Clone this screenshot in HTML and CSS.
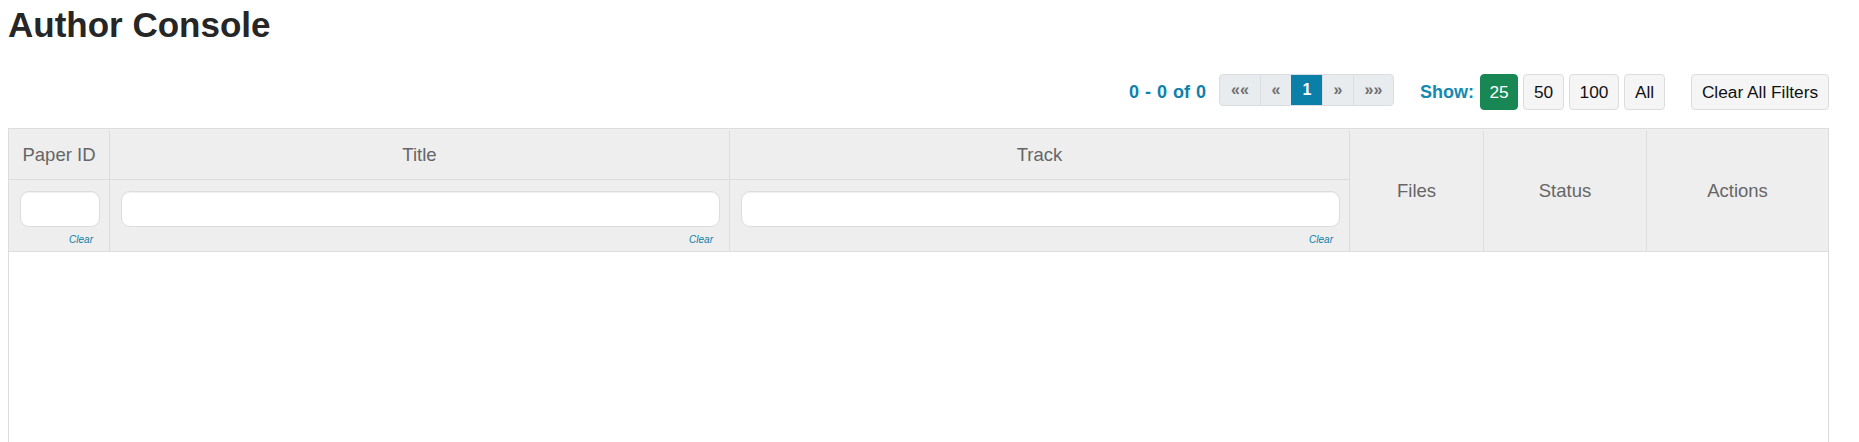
FILE: index.html
```html
<!DOCTYPE html>
<html lang="en">
<head>
<meta charset="utf-8">
<title>Author Console</title>
<link rel="stylesheet" href="styles.css">
</head>
<body>
<div class="page">
  <h1 class="page-title">Author Console</h1>

  <div class="toolbar">
    <div class="count">0 - 0 of <strong>0</strong></div>
    <div class="pager">
      <a class="pg pg-wide">««</a>
      <a class="pg">«</a>
      <a class="pg active">1</a>
      <a class="pg">»</a>
      <a class="pg pg-wide">»»</a>
    </div>
    <div class="show-label">Show:</div>
    <div class="sizes">
      <button class="btn btn-success">25</button>
      <button class="btn">50</button>
      <button class="btn">100</button>
      <button class="btn">All</button>
    </div>
    <button class="btn btn-clear">Clear All Filters</button>
  </div>

  <div class="grid-wrap">
    <table class="grid">
      <colgroup>
        <col class="c-id">
        <col class="c-title">
        <col class="c-track">
        <col class="c-files">
        <col class="c-status">
        <col class="c-actions">
      </colgroup>
      <thead>
        <tr class="head-row">
          <th>Paper ID</th>
          <th>Title</th>
          <th>Track</th>
          <th rowspan="2">Files</th>
          <th rowspan="2">Status</th>
          <th rowspan="2" class="last">Actions</th>
        </tr>
        <tr class="filter-row">
          <th><input class="filter" type="text"><div class="clear">Clear</div></th>
          <th><input class="filter" type="text"><div class="clear">Clear</div></th>
          <th><input class="filter" type="text"><div class="clear">Clear</div></th>
        </tr>
      </thead>
      <tbody></tbody>
    </table>
  </div>
</div>
</body>
</html>
```

FILE: styles.css
```css
html, body {
  margin: 0;
  padding: 0;
  overflow: hidden;
  height: 100%;
  background: #fff;
}

body {
  font-family: "Liberation Sans", Arial, sans-serif;
  color: #333;
}

.page {
  padding: 5px 30px 0 8px;
  height: 100%;
  box-sizing: border-box;
  display: flex;
  flex-direction: column;
}

.page-title {
  margin: 0;
  font-size: 35px;
  line-height: 40px;
  font-weight: bold;
  color: #262626;
}

.toolbar {
  display: flex;
  justify-content: flex-end;
  align-items: flex-start;
  margin-top: 29px;
  height: 36px;
}

.count {
  font-size: 18px;
  font-weight: bold;
  line-height: 36px;
  color: #0e81ab;
  word-spacing: 1px;
  margin-right: 13px;
}

.count strong {
  font-weight: bold;
}

.pager {
  display: flex;
  height: 32px;
  box-sizing: border-box;
  border: 1px solid #dadde1;
  border-radius: 4px;
  overflow: hidden;
  background: #e9ecef;
  margin-right: 26px;
}

.pg {
  width: 31px;
  box-sizing: border-box;
  text-align: center;
  font-size: 16px;
  font-weight: bold;
  line-height: 30px;
  color: #6e6e6e;
  border-left: 1px solid #dadde1;
}

.pg:first-child {
  border-left: 0;
}

.pg-wide {
  width: 40px;
}

.pg.active {
  background: #0a7fa8;
  color: #fff;
  border-left-color: #0a7fa8;
}

.show-label {
  font-size: 18px;
  font-weight: bold;
  line-height: 36px;
  color: #1589b1;
  margin-right: 6px;
}

.sizes {
  display: flex;
  gap: 5px;
  margin-right: 26px;
}

.btn {
  height: 36px;
  box-sizing: border-box;
  padding: 0;
  border: 1px solid #dcdcdc;
  border-radius: 4px;
  background: #f5f5f5;
  font-family: "Liberation Sans", Arial, sans-serif;
  font-size: 17.3px;
  line-height: 34px;
  color: #111;
  text-align: center;
}

.btn-success {
  background: #198754;
  border-color: #198754;
  color: #fff;
  width: 38px;
}

.sizes .btn:nth-child(2),
.sizes .btn:nth-child(4) {
  width: 41px;
}

.sizes .btn:nth-child(3) {
  width: 50px;
}

.btn-clear {
  width: 138px;
}

.grid-wrap {
  margin-top: 18px;
  flex: 1;
  min-height: 400px;
  border: 1px solid #ddd;
  border-bottom: 0;
}

.grid {
  width: 100%;
  table-layout: fixed;
  border-collapse: separate;
  border-spacing: 0;
  border-top: 2px solid #eee;
}

.c-id { width: 101px; }
.c-title { width: 620px; }
.c-track { width: 620px; }
.c-files { width: 134px; }
.c-status { width: 163px; }
.c-actions { width: 181px; }

.grid th {
  background: #eee;
  border-right: 1px solid #ddd;
  border-bottom: 1px solid #ddd;
  font-weight: normal;
  font-size: 18.5px;
  color: #666;
  text-align: center;
  vertical-align: middle;
  padding: 0;
}

.grid th.last {
  border-right: 0;
}

.head-row th {
  height: 48px;
}

.filter-row th {
  padding: 11px 9px 5px 11px;
  height: 55px;
  vertical-align: top;
}

.filter {
  display: block;
  width: 100%;
  height: 36px;
  box-sizing: border-box;
  border: 1px solid #ddd;
  border-radius: 9px;
  background: #fff;
  box-shadow: inset 0 1px 1px rgba(0, 0, 0, 0.06);
  margin: 0;
  padding: 0 8px;
}

.clear {
  margin-top: 7px;
  padding-right: 7px;
  text-align: right;
  font-size: 10px;
  line-height: 12px;
  font-style: italic;
  color: #0d7ea8;
}
```
